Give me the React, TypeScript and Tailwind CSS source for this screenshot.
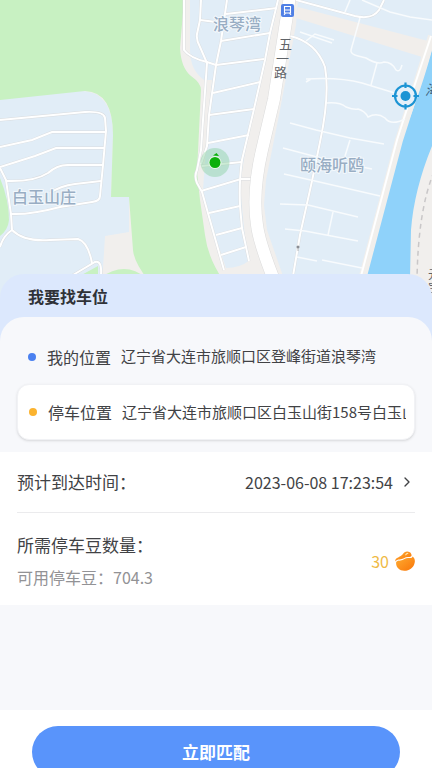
import React, { useState } from "react";
import { ChevronRight } from "lucide-react";

const localRoads = [
  "M0 120L85 112Q104 111 105 118L106 131L103 165L100 196Q100 201 92 202L60 207Q30 215 11 214",
  "M0 147L32 140L52 132H106",
  "M0 167L35 156L56 148H104",
  "M6 181Q34 182 48 173Q58 164 70 165H103",
  "M50 193Q60 186 75 184L101 181",
  "M0 168L6 180L11 214L12 230Q3 236 0 247",
  "M12 230Q24 242 50 240L78 239Q88 242 92 263",
  "M73 275L95 262Q102 260 101 275",
  "M184 0V50Q190 58 207 62L216 65",
  "M201 0L200 20L197 34Q196 40 200 47L207 63L203 120L201 150L197 170Q194 176 197 183L202 192L224 270",
  "M200 20L216 22",
  "M227 0L221 41L216 65L209 115L207 146L201 164",
  "M278 0L270 33L265 60L254 109L242 160Q239 180 240 206L242 228L249 261",
  "M226 14L277 8",
  "M221 41L270 33",
  "M216 65L264 59",
  "M213 93L260 82",
  "M209 115L254 109",
  "M208 143L249 135",
  "M202 166L242 162",
  "M201 191L241 179H252",
  "M209 213L240 206",
  "M216 235L242 228",
  "M221 255L246 247",
  "M290 36Q316 42 325 67Q330 95 320 142L312 181L300 235L293 276",
  "M296 0L355 16Q372 20 379 10L384 0",
];

const footpaths = [
  "M350 0L345 12",
  "M362 0L390 12L410 17L432 20",
  "M360 18L351 50Q350 54 358 56L366 58Q377 65 384 62Q392 62 396 70Q400 73 402 65",
  "M377 63L371 85",
  "M300 32L332 43M306 41L315 34L334 40",
  "M306 79Q340 77 362 83L398 94M306 82L311 79",
  "M327 103Q340 102 346 107Q354 110 358 109Q365 111 368 117Q377 112 385 118Q391 126 405 119",
  "M290 123L316 130L350 138L384 144",
  "M350 140L345 156",
  "M283 148L332 161L372 169",
  "M284 174L315 181L380 196",
  "M280 204L308 205L358 217",
  "M285 229L305 231L358 241",
  "M333 212L328 235",
  "M297 257L317 261",
  "M322 260L362 268",
];

const mainRoad = "M290 -4L274 99L262 150Q252 193 257 225Q259 242 274 280";

const MapView: React.FC = () => {
  return (
    <svg
      viewBox="0 0 432 310"
      preserveAspectRatio="xMidYMin slice"
      className="block h-[310px] w-full font-['Noto_Sans_CJK_SC',sans-serif]"
      role="img"
      aria-label="地图"
    >
      <rect width="432" height="310" fill="#f1efed" />

      {/* residential blocks */}
      <path d="M0 98L75 91Q113 88 113 135L111 197H129L129 232L105 236L103 268L92 310H0Z" fill="#e1edf7" />
      <path d="M190 0H279L265 62L247 140L240 185L245 238L250 260Q240 268 226 268L208 215L203 190L208 120L212 80H204Q190 70 190 50Z" fill="#e1edf7" />
      <path d="M298 0H432V42L362 276H283L267 230L264 205L266 180L280 110L296 25Z" fill="#e1edf7" />
      <path d="M298 7L428 41L422 57L296 18Z" fill="#f1eeeb" />

      {/* parks */}
      <path d="M0 0H184L180 48Q181 68 191 76Q201 83 201 90L197 172L200 200L205 235Q208 258 223 280H148Q134 262 133 250L129 197H111L113 135Q113 92 85 91L0 100Z" fill="#c8f1c2" />
      <path d="M0 178Q9 200 9 220Q8 230 0 236Z" fill="#c8f1c2" />
      <path d="M100 278Q125 260 146 278Z" fill="#c8f1c2" />
      <path d="M76 278L98 266V278Z" fill="#c8f1c2" />

      {/* river */}
      <path d="M432 50Q422 88 402 138L366 278H410L411 230Q414 190 432 146Z" fill="#8fd2fa" />
      <path d="M432 36L417 84L399 140L363 276" fill="none" stroke="#f1efec" strokeWidth="8" />
      <path d="M431 36L415 84L397 140L361 276" fill="none" stroke="#fff" strokeWidth="2" />
      <path d="M434 172Q418 210 417 280" fill="none" stroke="#c9c7c8" strokeWidth="1.5" strokeDasharray="5 4" />

      {localRoads.map((d) => (
        <path key={d} d={d} fill="none" stroke="#d9dcdf" strokeWidth="2.8" />
      ))}
      {localRoads.map((d) => (
        <path key={d} d={d} fill="none" stroke="#fff" strokeWidth="2" />
      ))}
      {footpaths.map((d) => (
        <path key={d} d={d} fill="none" stroke="#f8fbfd" strokeWidth="1.5" />
      ))}

      {/* main road */}
      <path d={mainRoad} fill="none" stroke="#dcdcdc" strokeWidth="13" />
      <path d={mainRoad} fill="none" stroke="#fff" strokeWidth="12" />

      <g fill="#98adc3" fontSize="16" fontWeight="500" stroke="#f3f8fc" strokeWidth="2" paintOrder="stroke">
        <text x="213" y="30">浪琴湾</text>
        <text x="12" y="203">白玉山庄</text>
        <text x="300" y="171">颐海听鸥</text>
      </g>
      <g fill="#5f6368" fontSize="13">
        <text x="279" y="49">五</text>
        <text x="276" y="63">一</text>
        <text x="274" y="77">路</text>
        <text x="425" y="95" fill="#3c617b" fontSize="14" fontStyle="italic">海</text>
        <text x="428" y="279" fontSize="12">元</text>
        <text x="428" y="292" fontSize="12">宝</text>
      </g>

      {/* station */}
      <rect x="281" y="4" width="13" height="13" rx="2" fill="#4f7fe5" />
      <path d="M284.500 6.500H290.500V13H284.500ZM284.500 10H290.500M286 12.500L284 15M289 12.500L291 15" fill="none" stroke="#fff" strokeWidth="1.1" />
      <path d="M297 246h2v2h-2zM298 248v3" fill="#8a8f94" stroke="#8a8f94" strokeWidth="0.6" />

      {/* current position */}
      <circle cx="215" cy="162.500" r="14.500" fill="#83cf9b" fillOpacity="0.42" />
      <circle cx="215" cy="162.500" r="6.500" fill="#e9f8e9" />
      <circle cx="215" cy="162.500" r="5.500" fill="#0bb00b" />
      <path d="M213 155.500L216.500 153L219 156Z" fill="#0bb00b" />

      {/* selected spot */}
      <g fill="none" stroke="#1c94d4">
        <circle cx="405.500" cy="96" r="10.500" fill="#e6f1fa" strokeWidth="2.200" />
        <path d="M405.500 82.500V88M405.500 104V109.500M392 96H397.500M413.500 96H419" strokeWidth="2.200" />
        <circle cx="405.500" cy="96" r="5" fill="#1c94d4" stroke="none" />
      </g>
    </svg>
  );
};

const BeanIcon: React.FC = () => (
  <svg viewBox="0 0 20 20" className="h-5 w-5" aria-hidden="true">
    <defs>
      <linearGradient id="bean" x1="0" y1="0" x2="1" y2="1">
        <stop offset="0" stopColor="#ffad32" />
        <stop offset="1" stopColor="#f97508" />
      </linearGradient>
    </defs>
    <path d="M.3 9C1.500 6.500 5.500 6 7.500 3.600C8.900 1.200 10.300.3 12.500.4C15.200.6 16.700 2.400 16.600 4.600C16.400 6 15 6 13 6C10 6 8 8.400 4.500 8.400C2.600 8.400 1.500 8.900.3 10.400Z" fill="url(#bean)" />
    <path d="M1.200 11C2.200 9.700 3.700 9.700 5.400 9.500C8.700 9.200 10.300 7.100 13 7.100C15.400 7.200 17.200 7 17.700 5.400C19.500 6.900 20.200 9.200 19.700 11.500C18.900 16.600 14.500 19.800 9.200 19.800C4.200 19.800.4 15.800 1.200 11Z" fill="url(#bean)" />
    <path d="M10.800 3.800Q11.500 2.300 12.800 2.300" fill="none" stroke="#ffe4ac" strokeWidth="1.200" strokeLinecap="round" />
  </svg>
);

const App: React.FC = () => {
  const [origin, setOrigin] = useState("辽宁省大连市旅顺口区登峰街道浪琴湾");
  const [parking, setParking] = useState("辽宁省大连市旅顺口区白玉山街158号白玉山庄");

  return (
    <div className="h-screen overflow-hidden bg-white font-['Noto_Sans_CJK_SC',sans-serif] text-[#414245]">
      <MapView />

      <main className="relative -mt-9 rounded-t-3xl bg-[#dce8fd]">
        <h1 className="px-7 pt-2.5 pb-2 text-base leading-[25px] font-bold text-[#303238]">
          我要找车位
        </h1>

        <div className="rounded-t-3xl bg-[#f7f8fb]">
          <div className="px-[17px] pt-3 pb-3">
            <div className="flex h-[55px] items-center px-[11px]">
              <span className="mr-[11px] h-2 w-2 shrink-0 rounded-full bg-[#4a80f0]" />
              <label htmlFor="origin" className="mr-2.5 shrink-0 text-base">
                我的位置
              </label>
              <input
                id="origin"
                value={origin}
                onChange={(e) => setOrigin(e.target.value)}
                className="min-w-0 flex-1 bg-transparent text-[15px] outline-none"
              />
            </div>
            <div className="flex h-14 items-center rounded-xl border border-[#f1f2f5] bg-white pr-2 pl-[11px] shadow-sm">
              <span className="mr-[11px] h-2 w-2 shrink-0 rounded-full bg-[#fbb32f]" />
              <label htmlFor="parking" className="mr-2.5 shrink-0 text-base">
                停车位置
              </label>
              <input
                id="parking"
                value={parking}
                onChange={(e) => setParking(e.target.value)}
                className="min-w-0 flex-1 bg-transparent text-[15px] outline-none"
              />
            </div>
          </div>

          <section className="bg-white px-[17px]">
            <div className="flex h-[61px] items-center justify-between border-b border-[#ebebed]">
              <span className="text-[17px]">预计到达时间：</span>
              <button type="button" className="flex items-center gap-1.5 text-base">
                2023-06-08 17:23:54
                <ChevronRight className="h-4 w-4" strokeWidth={2} />
              </button>
            </div>
            <div className="flex items-center justify-between pt-4 pb-3">
              <div>
                <p className="text-[17px] leading-8">所需停车豆数量：</p>
                <p className="text-base leading-8 text-[#929295]">可用停车豆：704.3</p>
              </div>
              <div className="flex items-center gap-1.5 text-base text-[#efba45]">
                30
                <BeanIcon />
              </div>
            </div>
          </section>

          <div className="h-[105px]" />
        </div>
      </main>

      <footer className="bg-white px-8 py-4">
        <button
          type="button"
          className="h-13 w-full rounded-full bg-[#5994fb] text-[17px] font-bold text-white"
        >
          立即匹配
        </button>
      </footer>
    </div>
  );
};

export default App;
